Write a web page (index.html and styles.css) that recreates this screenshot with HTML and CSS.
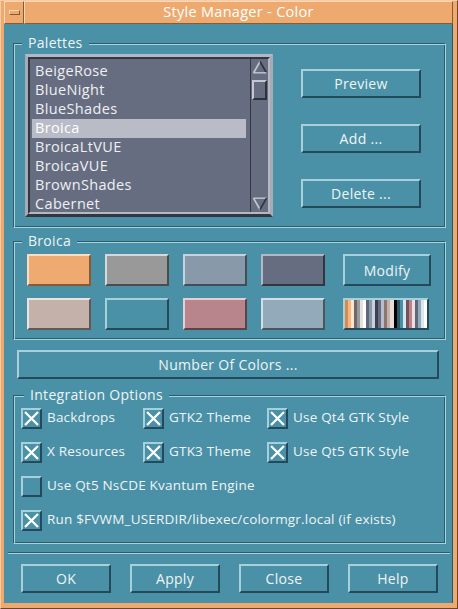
FILE: index.html
```html
<!DOCTYPE html>
<html>
<head>
<meta charset="utf-8">
<link rel="stylesheet" href="styles.css">
</head>
<body>
<div class="window">
  <div class="titlebar">
    <div class="menu-btn"><span class="menu-glyph"></span></div>
    <div class="title">Style Manager - Color</div>
  </div>
  <div class="client">
    <div class="group palettes">
      <span class="legend">Palettes</span>
      <div class="listbox">
        <div class="listinner">
          <ul class="items">
            <li>BeigeRose</li>
            <li>BlueNight</li>
            <li>BlueShades</li>
            <li class="selected">Broica</li>
            <li>BroicaLtVUE</li>
            <li>BroicaVUE</li>
            <li>BrownShades</li>
            <li>Cabernet</li>
          </ul>
          <div class="scrollbar">
            <svg class="arrow" width="16" height="14" viewBox="0 0 16 14">
              <line x1="1.5" y1="13" x2="8" y2="1.5" stroke="#c3c7d1" stroke-width="1.6"/>
              <line x1="8" y1="1.5" x2="14.5" y2="13" stroke="#2f323b" stroke-width="1.6"/>
              <line x1="1.5" y1="12.8" x2="14.5" y2="12.8" stroke="#c3c7d1" stroke-width="1.4"/>
            </svg>
            <div class="thumb"></div>
            <div class="track"></div>
            <svg class="arrow" width="16" height="14" viewBox="0 0 16 14">
              <line x1="1.5" y1="1.2" x2="14.5" y2="1.2" stroke="#c3c7d1" stroke-width="1.4"/>
              <line x1="1.5" y1="1.2" x2="8" y2="12.5" stroke="#c3c7d1" stroke-width="1.6"/>
              <line x1="14.5" y1="1.2" x2="8" y2="12.5" stroke="#2f323b" stroke-width="1.6"/>
            </svg>
          </div>
        </div>
      </div>
      <div class="btncol">
        <div class="btn">Preview</div>
        <div class="btn">Add ...</div>
        <div class="btn">Delete ...</div>
      </div>
    </div>

    <div class="group broica">
      <span class="legend">Broica</span>
      <div class="swrow">
        <div class="sw sw-orange"></div>
        <div class="sw sw-gray"></div>
        <div class="sw sw-bluegray"></div>
        <div class="sw sw-slate"></div>
        <div class="btn modify">Modify</div>
      </div>
      <div class="swrow">
        <div class="sw sw-beige"></div>
        <div class="sw sw-teal"></div>
        <div class="sw sw-rose"></div>
        <div class="sw sw-lightblue"></div>
        <div class="stripes">
          <span style="background:#d98a4c"></span>
          <span style="background:#f4b784"></span>
          <span style="background:#fde5d0"></span>
          <span style="background:#6a6a6a"></span>
          <span style="background:#9a9a9a"></span>
          <span style="background:#e2e2e2"></span>
          <span style="background:#ffffff"></span>
          <span style="background:#5e6878"></span>
          <span style="background:#8899aa"></span>
          <span style="background:#c8d2dc"></span>
          <span style="background:#3c4050"></span>
          <span style="background:#676d80"></span>
          <span style="background:#b8bccc"></span>
          <span style="background:#8a7870"></span>
          <span style="background:#c4b2aa"></span>
          <span style="background:#e8dcd8"></span>
          <span style="background:#000000"></span>
          <span style="background:#2a5868"></span>
          <span style="background:#4a90a5"></span>
          <span style="background:#d0eaf0"></span>
          <span style="background:#7a5058"></span>
          <span style="background:#b8858c"></span>
          <span style="background:#f0dde0"></span>
          <span style="background:#5a6a7a"></span>
          <span style="background:#93aabb"></span>
          <span style="background:#dce4ec"></span>
          <span style="background:#ffffff"></span>
        </div>
      </div>
    </div>

    <div class="btn numcolors">Number Of Colors ...</div>

    <div class="group integration">
      <span class="legend">Integration Options</span>
      <div class="opts">
        <div class="opt"><span class="cb checked"><svg width="17" height="17" viewBox="0 0 17 17"><path d="M2 2 L15 15 M15 2 L2 15" stroke="#ffffff" stroke-width="2.3"/></svg></span><span class="lbl">Backdrops</span></div>
        <div class="opt"><span class="cb checked"><svg width="17" height="17" viewBox="0 0 17 17"><path d="M2 2 L15 15 M15 2 L2 15" stroke="#ffffff" stroke-width="2.3"/></svg></span><span class="lbl">GTK2 Theme</span></div>
        <div class="opt"><span class="cb checked"><svg width="17" height="17" viewBox="0 0 17 17"><path d="M2 2 L15 15 M15 2 L2 15" stroke="#ffffff" stroke-width="2.3"/></svg></span><span class="lbl">Use Qt4 GTK Style</span></div>
        <div class="opt"><span class="cb checked"><svg width="17" height="17" viewBox="0 0 17 17"><path d="M2 2 L15 15 M15 2 L2 15" stroke="#ffffff" stroke-width="2.3"/></svg></span><span class="lbl">X Resources</span></div>
        <div class="opt"><span class="cb checked"><svg width="17" height="17" viewBox="0 0 17 17"><path d="M2 2 L15 15 M15 2 L2 15" stroke="#ffffff" stroke-width="2.3"/></svg></span><span class="lbl">GTK3 Theme</span></div>
        <div class="opt"><span class="cb checked"><svg width="17" height="17" viewBox="0 0 17 17"><path d="M2 2 L15 15 M15 2 L2 15" stroke="#ffffff" stroke-width="2.3"/></svg></span><span class="lbl">Use Qt5 GTK Style</span></div>
        <div class="opt wide"><span class="cb"></span><span class="lbl">Use Qt5 NsCDE Kvantum Engine</span></div>
        <div class="opt wide"><span class="cb checked"><svg width="17" height="17" viewBox="0 0 17 17"><path d="M2 2 L15 15 M15 2 L2 15" stroke="#ffffff" stroke-width="2.3"/></svg></span><span class="lbl">Run $FVWM_USERDIR/libexec/colormgr.local (if exists)</span></div>
      </div>
    </div>

    <div class="separator"></div>

    <div class="actions">
      <div class="btn act">OK</div>
      <div class="btn act">Apply</div>
      <div class="btn act">Close</div>
      <div class="btn act">Help</div>
    </div>
  </div>
</div>
</body>
</html>
```

FILE: styles.css
```css
* { box-sizing: border-box; }

html, body {
  margin: 0;
  padding: 0;
  background: #4a90a6;
}

body {
  font-family: "Open Sans", "Noto Sans", sans-serif;
  font-size: 13.5px;
  color: #eef5f7;
}

.window {
  width: 458px;
  height: 609px;
  background: #eea96f;
  border: 1px solid;
  border-color: #f8cda6 #6e4526 #6e4526 #f8cda6;
  padding: 0 4px 5px 3px;
  display: flex;
  flex-direction: column;
}

.titlebar {
  height: 23px;
  display: flex;
  flex: none;
}

.menu-btn {
  width: 20px;
  height: 23px;
  border: 1px solid;
  border-color: #fbd9b8 #8a5a32 #8a5a32 #fbd9b8;
  display: flex;
  align-items: center;
  justify-content: center;
}

.menu-glyph {
  width: 11px;
  height: 5px;
  border: 1px solid;
  border-color: #fbd9b8 #8a5a32 #8a5a32 #fbd9b8;
}

.title {
  flex: 1;
  height: 23px;
  border: 1px solid;
  border-color: #fbd9b8 #8a5a32 #8a5a32 #fbd9b8;
  text-align: center;
  line-height: 20px;
  font-size: 14.5px;
  color: #ffffff;
  letter-spacing: 0.3px;
}

.client {
  flex: 1;
  background: #4a90a6;
  border-right: 1px solid #2a5a68;
  padding-top: 19px;
}

.group {
  position: relative;
  margin-left: 9px;
  width: 433px;
  border: 1px solid;
  border-color: #2a5c6a #a9d3df #a9d3df #2a5c6a;
  box-shadow: inset 1px 1px 0 #a9d3df, inset -1px -1px 0 #2a5c6a;
}

.legend {
  position: absolute;
  top: -9px;
  left: 8px;
  background: #4a90a6;
  padding: 0 6px;
  line-height: 16px;
  font-size: 14px;
  letter-spacing: 0.3px;
  color: #eef5f7;
}

.palettes {
  display: flex;
  padding: 10px 0 10px 11px;
}

.listbox {
  width: 248px;
  height: 163px;
  border: 3px solid;
  border-color: #b3b8c4 #a6abb7 #34373f #a6abb7;
}

.listinner {
  height: 100%;
  border: 2px solid;
  border-color: #34373f #b3b8c4 #b3b8c4 #34373f;
  background: #676d80;
  display: flex;
}

.items {
  list-style: none;
  margin: 0;
  padding: 3px 4px 0 2px;
  flex: 1;
  overflow: hidden;
}

.items li {
  height: 19px;
  line-height: 18px;
  padding-left: 3px;
  font-size: 14.5px;
  letter-spacing: 0.35px;
  color: #eef0f4;
  white-space: nowrap;
}

.items li.selected {
  background: #b9bcc6;
  color: #ffffff;
}

.scrollbar {
  width: 18px;
  border-left: 1px solid #34373f;
  display: flex;
  flex-direction: column;
  align-items: center;
  padding: 1px 0;
}

.arrow {
  flex: none;
  display: block;
}

.thumb {
  width: 15px;
  height: 20px;
  margin-top: 6px;
  border: 2px solid;
  border-color: #c3c7d1 #2f323b #2f323b #c3c7d1;
}

.track {
  flex: 1;
}

.btncol {
  display: flex;
  flex-direction: column;
  gap: 26px;
  padding-top: 15px;
  margin-left: 28px;
}

.btn {
  width: 120px;
  height: 29px;
  border: 2px solid;
  border-color: #a6d0dc #23495a #23495a #a6d0dc;
  display: flex;
  align-items: center;
  justify-content: center;
  font-size: 14px;
  letter-spacing: 0.3px;
  color: #eef5f7;
}

.broica {
  margin-top: 13px;
  padding: 12px 0 9px 13px;
  display: flex;
  flex-direction: column;
  gap: 12px;
}

.swrow {
  display: flex;
  gap: 14px;
}

.sw {
  width: 64px;
  height: 32px;
  border: 2px solid;
  border-color: rgba(255,255,255,0.55) rgba(0,0,0,0.5) rgba(0,0,0,0.5) rgba(255,255,255,0.55);
}

.sw-orange { background: #eeaa70; border-color: #fddcc0 #8a5a32 #8a5a32 #fddcc0; }
.sw-gray { background: #999999; border-color: #d8d8d8 #4c4c4c #4c4c4c #d8d8d8; }
.sw-bluegray { background: #8899aa; border-color: #c8d2dc #444c56 #444c56 #c8d2dc; }
.sw-slate { background: #676d80; border-color: #b4b8c4 #33363f #33363f #b4b8c4; }
.sw-beige { background: #c4b2aa; border-color: #ece4e0 #625954 #625954 #ece4e0; }
.sw-teal { background: #4a90a6; border-color: #a6d0dc #23495a #23495a #a6d0dc; }
.sw-rose { background: #b8858c; border-color: #e4d0d4 #5c4246 #5c4246 #e4d0d4; }
.sw-lightblue { background: #93aabb; border-color: #d4dee6 #4a555e #4a555e #d4dee6; }

.modify {
  width: 88px;
  height: 32px;
  margin-left: 4px;
}

.stripes {
  width: 86px;
  height: 32px;
  margin-left: 4px;
  border: 2px solid;
  border-color: #a6d0dc #23495a #23495a #a6d0dc;
  display: flex;
}

.stripes span {
  flex: 1;
}

.numcolors {
  width: 422px;
  margin: 10px 0 0 13px;
}

.integration {
  margin-top: 16px;
  padding: 12px 0 12px 7px;
}

.integration .legend {
  left: 10px;
}

.opts {
  display: grid;
  grid-template-columns: 122px 124px auto;
  grid-auto-rows: 21px;
  row-gap: 13px;
}

.opt {
  display: flex;
  align-items: center;
  gap: 5px;
  font-size: 13.5px;
  letter-spacing: 0.2px;
  white-space: nowrap;
  color: #eef5f7;
}

.opt .lbl {
  margin-bottom: 4px;
}

.opt.wide {
  grid-column: 1 / -1;
}

.cb {
  width: 21px;
  height: 21px;
  flex: none;
  border: 2px solid;
  border-color: #a6d0dc #23495a #23495a #a6d0dc;
  display: flex;
  align-items: center;
  justify-content: center;
}

.cb svg {
  display: block;
}

.separator {
  margin: 8px 0 0 4px;
  width: 442px;
  height: 2px;
  border-top: 1px solid #2a5c6a;
  border-bottom: 1px solid #a9d3df;
}

.actions {
  display: flex;
  gap: 19px;
  margin: 10px 0 0 17px;
}

.act {
  width: 90px;
}
```
